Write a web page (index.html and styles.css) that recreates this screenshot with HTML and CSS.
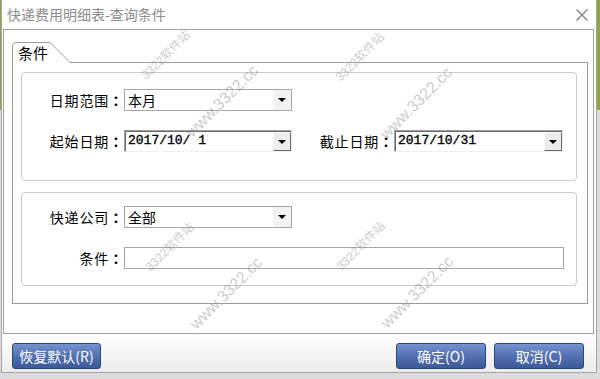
FILE: index.html
```html
<!DOCTYPE html>
<html lang="zh-CN">
<head>
	<meta charset="UTF-8">
	<title>快递费用明细表-查询条件</title>
	<link rel="stylesheet" href="styles.css">
</head>
<body>
	<div class="desk">
		<div class="window">
			<div class="titlebar">
				<span class="title">快递费用明细表-查询条件</span>
				<svg class="close" width="12" height="12" viewBox="0 0 12 12"><path d="M0.5 0.5L11.5 11.5M11.5 0.5L0.5 11.5" stroke="#7a7a7a" stroke-width="1.1" fill="none"/></svg>
			</div>

			<div class="client">
				<div class="tab">
					<svg class="tab-shape" width="60" height="21" viewBox="0 0 60 21">
						<path d="M0.5 21V4Q0.5 0.5 4 0.5H38L58.5 21Z" fill="#fff"/>
						<path d="M0.5 21V4Q0.5 0.5 4 0.5H38L58.5 21" fill="none" stroke="#9c9c9c"/>
					</svg>
					<span class="tab-text">条件</span>
				</div>

				<div class="panel">
					<div class="group g1">
						<div class="row">
							<label class="lbl">日期范围<i class="colon">：</i></label>
							<div class="combo flat">
								<span class="val">本月</span>
								<span class="arrow"></span>
							</div>
						</div>
						<div class="row">
							<label class="lbl">起始日期<i class="colon">：</i></label>
							<div class="combo sunk">
								<span class="val num">2017/10/ 1</span>
								<span class="arrow"></span>
							</div>
							<label class="lbl">截止日期<i class="colon">：</i></label>
							<div class="combo sunk wide">
								<span class="val num">2017/10/31</span>
								<span class="arrow"></span>
							</div>
						</div>
					</div>

					<div class="group g2">
						<div class="row">
							<label class="lbl">快递公司<i class="colon">：</i></label>
							<div class="combo flat">
								<span class="val">全部</span>
								<span class="arrow"></span>
							</div>
						</div>
						<div class="row">
							<label class="lbl">条件<i class="colon">：</i></label>
							<input type="text" class="field" value="">
						</div>
					</div>
				</div>
			</div>

			<div class="btnbar">
				<button class="btn first">恢复默认(R)</button>
				<span class="spacer"></span>
				<button class="btn">确定(O)</button>
				<button class="btn">取消(C)</button>
			</div>
		</div>

		<!-- watermark -->
		<div class="wm t1"><span class="wm-a">3322软件站</span><span class="wm-b">www.3322.cc</span></div>
		<div class="wm t2"><span class="wm-a">3322软件站</span><span class="wm-b">www.3322.cc</span></div>
		<div class="wm t3"><span class="wm-a">3322软件站</span><span class="wm-b">www.3322.cc</span></div>
		<div class="wm t4"><span class="wm-a">3322软件站</span><span class="wm-b">www.3322.cc</span></div>
	</div>
</body>
</html>
```

FILE: styles.css
```css
*{
	box-sizing: border-box;
}
body{
	margin: 0;
	height: 379px;
	overflow: hidden;
	background: linear-gradient(#8ea83b 0, #8ea83b 110px, #dcdcdc 110px);
	font: 14px/1.2 "Noto Sans CJK SC", sans-serif;
	color: #000;
}
.desk{
	position: relative;
	width: 600px;
	height: 379px;
}
.window{
	margin-left: 1px;
	width: 596px;
	height: 373px;
	background: #fff;
	border: 1px solid #a6a6a6;
	border-top: 0;
	display: flex;
	flex-direction: column;
}

/* title */
.titlebar{
	height: 29px;
	flex: none;
	display: flex;
	align-items: center;
	padding: 0 8px 0 5px;
	color: #8c8c8c;
	font-size: 14px;
}
.title{
	flex: 1;
}
.close{
	display: block;
}

/* client area */
.client{
	height: 305px;
	flex: none;
	margin: 0 2px 0 1px;
	border: 1px solid #a0a0a0;
	padding: 12px 5px 29px 8px;
	display: flex;
	flex-direction: column;
}
.tab{
	position: relative;
	z-index: 1;
	width: 60px;
	height: 21px;
	flex: none;
	margin-bottom: -1px;
}
.tab-shape{
	position: absolute;
	left: 0;
	top: 0;
}
.tab-text{
	position: relative;
	display: block;
	padding: 0 0 0 6px;
	line-height: 21px;
	font-size: 15px;
}
.panel{
	flex: 1;
	border: 1px solid #9c9c9c;
	padding: 9px 10px 17px 8px;
	display: flex;
	flex-direction: column;
	gap: 11px;
}
.group{
	border: 1px solid #cacaca;
	border-radius: 4px;
	display: flex;
	flex-direction: column;
	gap: 19px;
}
.g1{
	height: 109px;
	padding-top: 16px;
}
.g2{
	height: 94px;
	padding-top: 13px;
}
.row{
	display: flex;
	align-items: center;
	height: 22px;
}
.lbl{
	width: 101px;
	margin-right: 1px;
	text-align: right;
	font-size: 14px;
	line-height: 22px;
	letter-spacing: 0.8px;
}
.colon{
	display: inline-block;
	width: 14px;
	letter-spacing: 0;
	text-align: center;
	font-style: normal;
	font-weight: bold;
	font-family: "Noto Sans CJK JP", sans-serif;
}

/* combo boxes */
.combo{
	width: 168px;
	height: 22px;
	display: flex;
	align-items: stretch;
	background: #fff;
}
.combo.wide{
	width: 169px;
}
.combo.flat{
	border: 1px solid #a6a6a6;
}
.combo.sunk{
	border: 1px solid;
	border-color: #a0a0a0 #f0f0f0 #f0f0f0 #a0a0a0;
	box-shadow: inset 1px 1px 0 #6a6a6a;
}
.val{
	flex: 1;
	padding-left: 3px;
	line-height: 20px;
	white-space: pre;
}
.num{
	font: 13px/20px "Liberation Mono", monospace;
	-webkit-text-stroke: 0.35px #000;
}
.arrow{
	width: 18px;
	display: flex;
	align-items: center;
	justify-content: center;
	background: #f3f3f3;
}
.arrow::before{
	content: "";
	border-left: 4px solid transparent;
	border-right: 4px solid transparent;
	border-top: 4px solid #000;
}
.sunk .arrow{
	margin: 1px 0 0;
	border: 1px solid;
	border-color: #fafafa #6a6a6a #6a6a6a #fafafa;
	background: #ececec;
}
.field{
	width: 440px;
	height: 22px;
	margin: 0;
	border: 1px solid #a6a6a6;
	background: #fff;
	outline: none;
}

/* buttons */
.btnbar{
	flex: 1;
	display: flex;
	align-items: flex-start;
	gap: 8px;
	padding: 9px 12px 0 10px;
	background: linear-gradient(#fff, #ececec);
}
.spacer{
	flex: 1;
}
.btn{
	width: 90px;
	height: 26px;
	padding: 0;
	border: 1px solid #2b4580;
	border-radius: 3px;
	background: linear-gradient(#7493cf, #5371b0 50%, #3c5a99);
	color: #fff;
	font: 14px/24px "Noto Sans CJK SC", sans-serif;
}
.btn.first{
	width: 89px;
}

/* watermark */
.wm{
	position: absolute;
	width: 0;
	height: 0;
	pointer-events: none;
	color: rgba(150, 150, 150, .5);
	font-family: "Liberation Sans", "Noto Sans CJK SC", sans-serif;
}
.wm span{
	position: absolute;
	white-space: nowrap;
	transform: translate(-50%, -50%) rotate(-45deg);
}
.wm-a{
	left: 0;
	top: 0;
	font-size: 12px;
}
.wm-b{
	left: 56px;
	top: 46px;
	font-size: 16px;
}
.t1{ left: 166px; top: 55px; }
.t2{ left: 360px; top: 57px; }
.t3{ left: 170px; top: 247px; }
.t4{ left: 361px; top: 246px; }
```
